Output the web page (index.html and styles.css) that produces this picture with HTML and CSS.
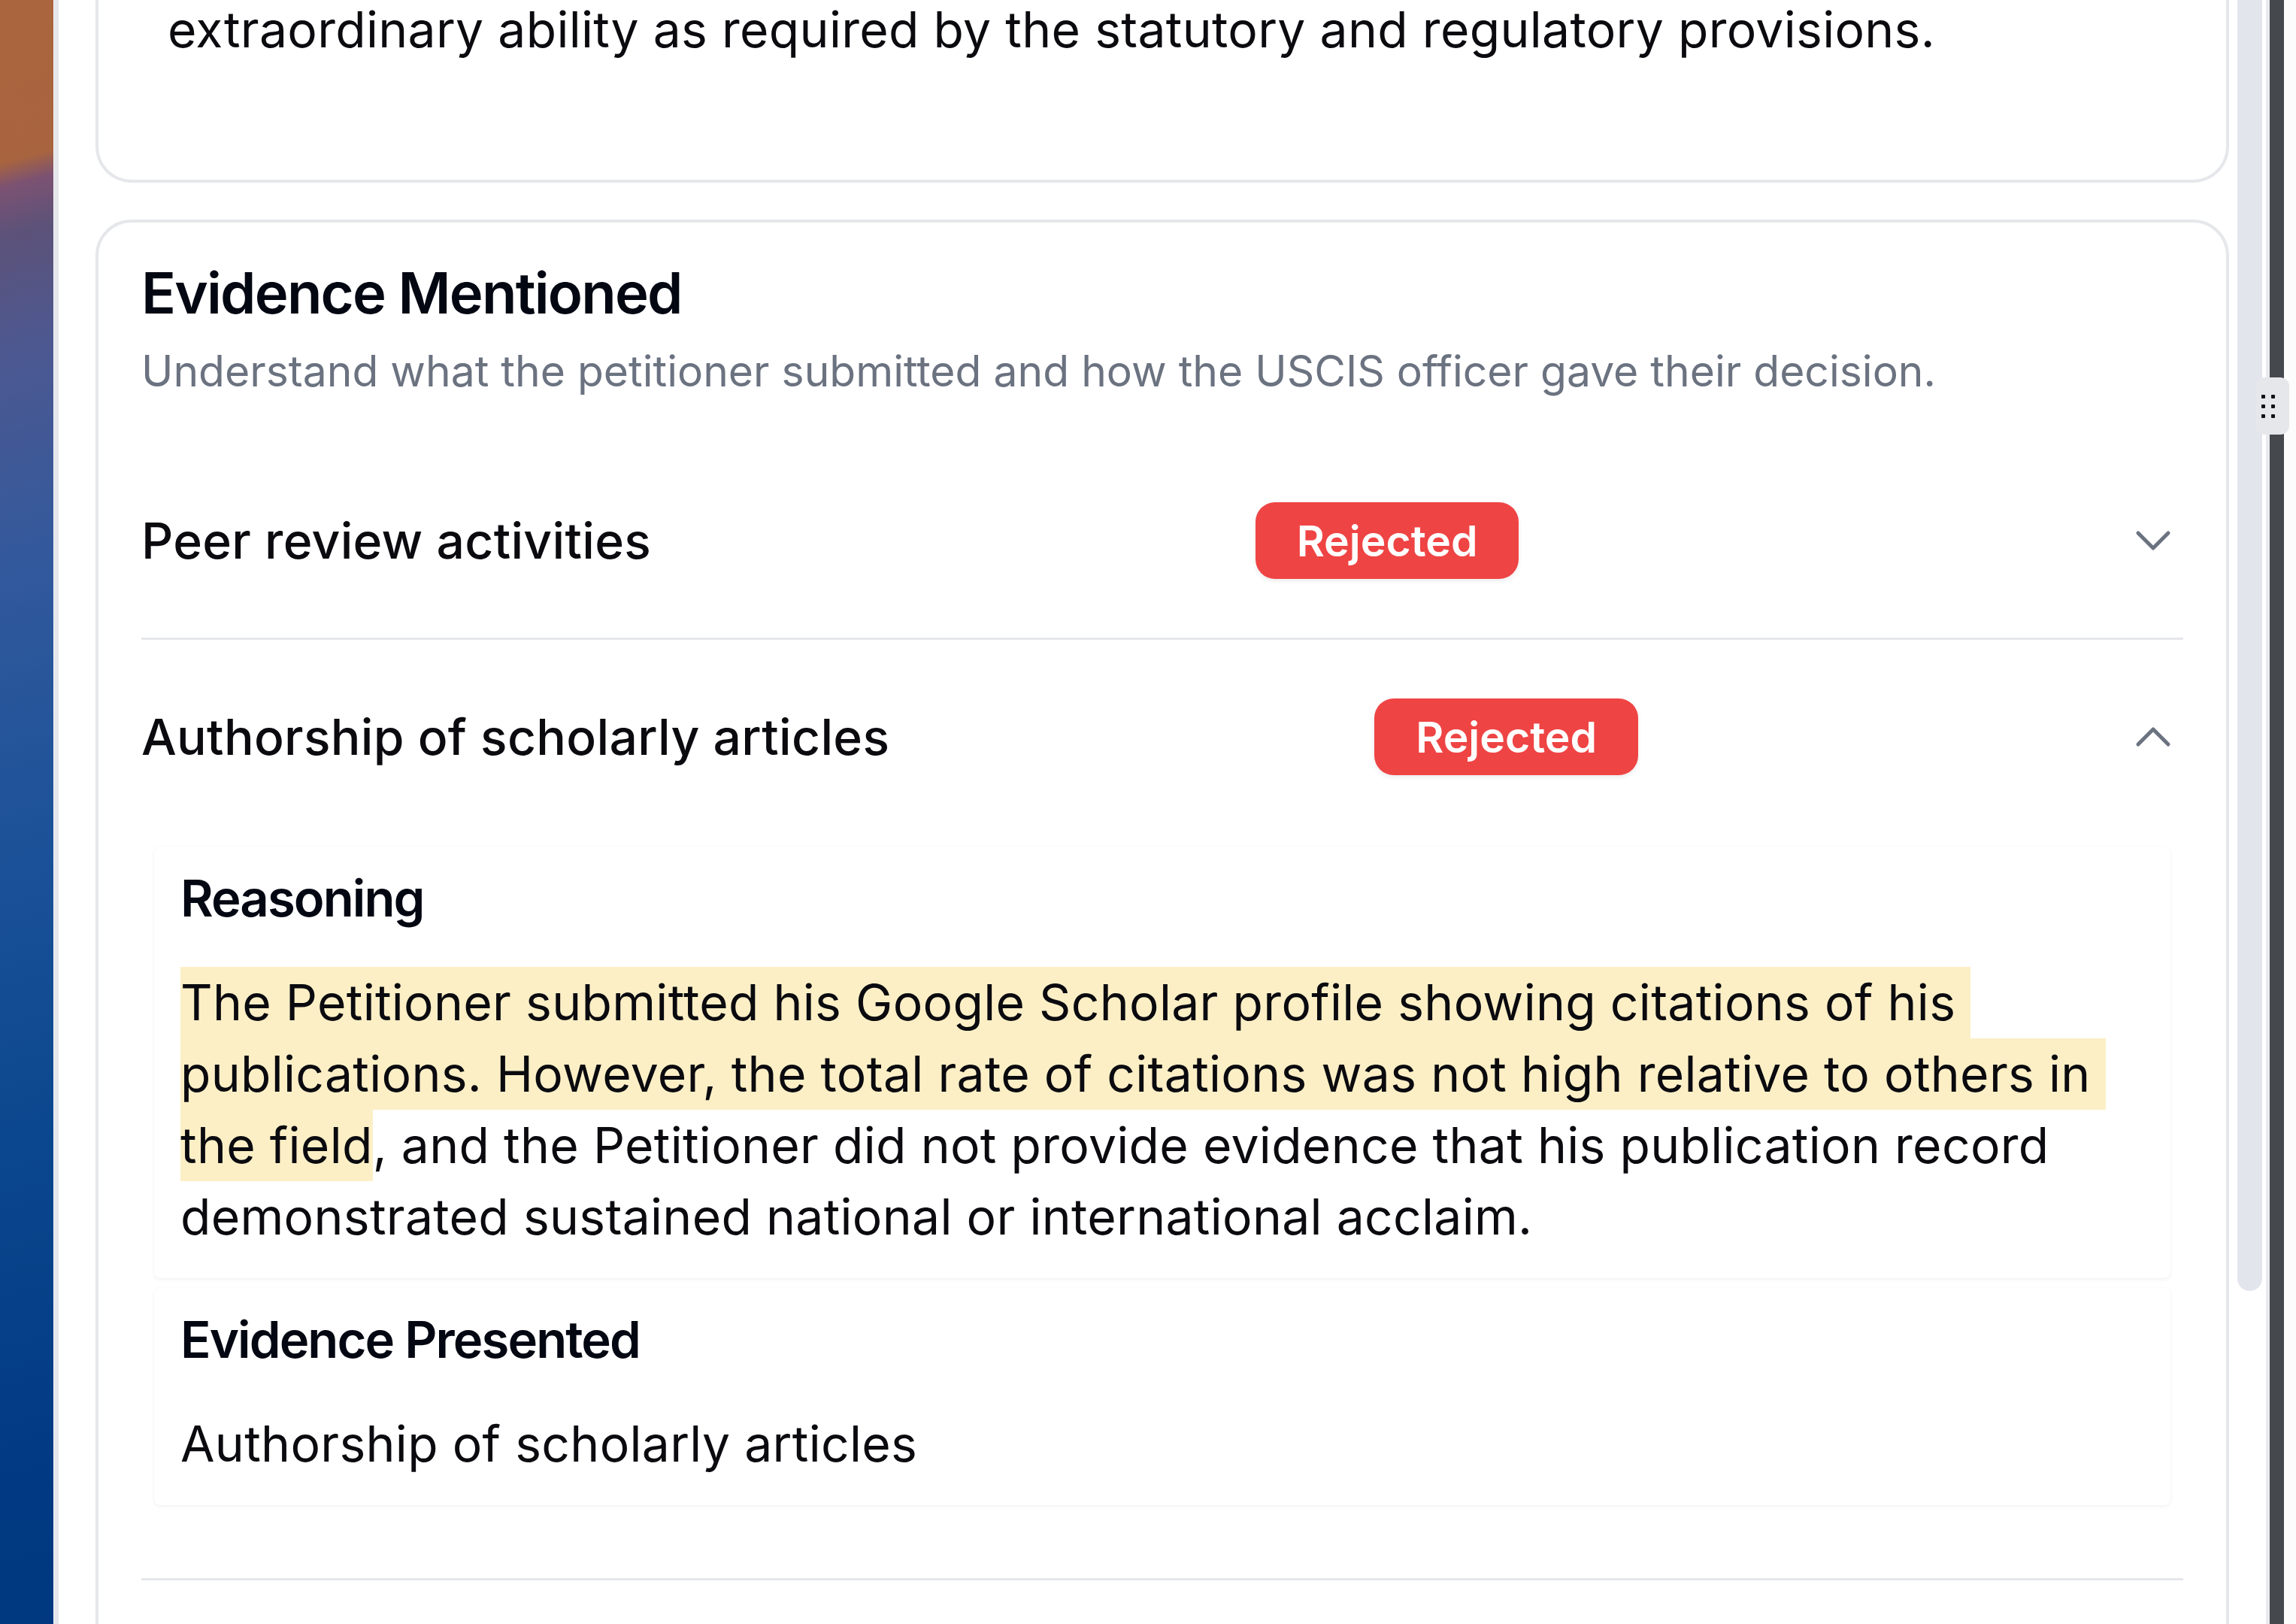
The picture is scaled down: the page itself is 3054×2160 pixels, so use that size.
FILE: index.html
```html
<!DOCTYPE html>
<html lang="en">
<head>
<meta charset="utf-8">
<title>Evidence Mentioned</title>
<link rel="stylesheet" href="styles.css">
</head>
<body>
<div class="screen">
  <div class="wallpaper"></div>
  <div class="win-edge"></div>
  <main class="main">
    <div class="content">
      <section class="card card-tail">
        <p class="tail-text">extraordinary ability as required by the statutory and regulatory provisions.</p>
      </section>
      <section class="card card-evidence">
        <h2 class="card-title">Evidence Mentioned</h2>
        <p class="card-sub">Understand what the petitioner submitted and how the USCIS officer gave their decision.</p>
        <div class="acc">
          <div class="acc-item">
            <div class="acc-head">
              <span class="acc-title">Peer review activities</span>
              <span class="badge">Rejected</span>
              <svg class="chev" viewBox="0 0 24 24" fill="none" stroke="currentColor" stroke-width="1.5" stroke-linecap="round" stroke-linejoin="round"><path d="m6 9 6 6 6-6"/></svg>
            </div>
          </div>
          <div class="acc-item open">
            <div class="acc-head">
              <span class="acc-title">Authorship of scholarly articles</span>
              <span class="badge">Rejected</span>
              <svg class="chev" viewBox="0 0 24 24" fill="none" stroke="currentColor" stroke-width="1.5" stroke-linecap="round" stroke-linejoin="round"><path d="m18 15-6-6-6 6"/></svg>
            </div>
            <div class="acc-body">
              <div class="panel">
                <h3 class="panel-title">Reasoning</h3>
                <p class="panel-text"><mark class="hl hl-cont">The Petitioner submitted his Google Scholar profile showing citations of his</mark> <mark class="hl hl-cont">publications. However, the total rate of citations was not high relative to others in</mark> <mark class="hl">the field</mark>, and the Petitioner did not provide evidence that his publication record demonstrated sustained national or international acclaim.</p>
              </div>
              <div class="panel">
                <h3 class="panel-title">Evidence Presented</h3>
                <p class="panel-text">Authorship of scholarly articles</p>
              </div>
            </div>
          </div>
        </div>
      </section>
    </div>
    <div class="scroll-track"><div class="scroll-thumb"></div></div>
  </main>
  <div class="pane-line"></div>
  <div class="pane-dark"></div>
  <div class="pane-right"></div>
  <div class="grip"><i></i><i></i><i></i><i></i><i></i><i></i></div>
</div>
</body>
</html>
```

FILE: styles.css
```css
* { box-sizing: border-box; margin: 0; padding: 0; }

html, body {
  width: 3054px;
  height: 2160px;
  overflow: hidden;
}

body {
  font-family: Inter, "Noto Sans", "Liberation Sans", sans-serif;
  color: #0a0a0f;
  background: #ffffff;
}

.screen {
  position: relative;
  display: flex;
  height: 2160px;
}

.wallpaper {
  flex: none;
  width: 71px;
  background: linear-gradient(165deg,
    #aa653e 0px,
    #a8643f 210px,
    #7c5272 242px,
    #5c5279 305px,
    #4d5890 450px,
    #33599c 720px,
    #1d5299 1070px,
    #0b478e 1470px,
    #023b83 1870px,
    #00377f 2160px);
}

.win-edge {
  flex: none;
  width: 7px;
  background: #e4e6eb;
  border-left: 1px solid #f4f5f7;
}

.main {
  flex: none;
  width: 2936px;
  display: flex;
  background: #ffffff;
}

.content {
  flex: none;
  width: 2887px;
  padding-left: 49px;
  display: flex;
  flex-direction: column;
  gap: 49px;
}

.card {
  width: 2838px;
  background: #ffffff;
  border: 4px solid #e5e7eb;
  border-radius: 48px;
}

.card-tail {
  border-top: none;
  border-radius: 0 0 48px 48px;
  padding: 0 57px 160px 92px;
}

.tail-text {
  font-size: 66px;
  line-height: 79px;
  letter-spacing: 0.3px;
  color: #0a0a0f;
}

.card-evidence {
  padding: 47px 57px 0 57px;
  min-height: 2000px;
}

.card-title {
  font-size: 76px;
  line-height: 92px;
  font-weight: 600;
  color: #030712;
  letter-spacing: -1.8px;
}

.card-sub {
  margin-top: 19px;
  font-size: 57px;
  line-height: 80px;
  color: #6b7280;
}

.acc {
  margin-top: 56px;
}

.acc-item {
  border-bottom: 3px solid #e5e7eb;
}

.acc-head {
  display: flex;
  justify-content: space-between;
  align-items: center;
  padding: 78px 0;
}

.acc-title {
  font-size: 66px;
  line-height: 79px;
  font-weight: 500;
  letter-spacing: 0.3px;
  color: #0a0a0f;
}

.badge {
  display: inline-flex;
  align-items: center;
  height: 102px;
  padding: 0 55px;
  border-radius: 26px;
  background: #ef4444;
  color: #ffffff;
  font-size: 57px;
  font-weight: 600;
  box-shadow: 0 3px 6px rgba(0, 0, 0, 0.08);
}

.chev {
  width: 80px;
  height: 80px;
  color: #6b7280;
  flex: none;
}

.acc-body {
  padding: 17px 17px 97px;
  display: flex;
  flex-direction: column;
  gap: 13px;
}

.panel {
  background: #ffffff;
  border-radius: 8px;
  padding: 28px 35px 34px;
  box-shadow: 0 2px 5px rgba(0, 0, 0, 0.05), 0 0 2px rgba(0, 0, 0, 0.04);
}

.panel-title {
  font-size: 67px;
  line-height: 82px;
  font-weight: 600;
  letter-spacing: -1.9px;
  color: #030712;
  margin-bottom: 50px;
}

.panel-text {
  font-size: 66px;
  line-height: 95px;
  letter-spacing: 0.3px;
  color: #0a0a0f;
}

.hl {
  display: inline-block;
  line-height: 95px;
  background: #fcefc6;
  color: inherit;
}

.hl-cont {
  padding-right: 20px;
}

.scroll-track {
  flex: none;
  width: 33px;
  margin-left: 11px;
}

.scroll-thumb {
  height: 1717px;
  background: #e2e5ec;
  border-radius: 0 0 17px 17px;
}

.pane-line {
  flex: none;
  width: 5px;
  background: #e8eaee;
}

.pane-dark {
  flex: none;
  width: 19px;
  background: #45494e;
}

.pane-right {
  flex: none;
  width: 16px;
  background: #fcfcfc;
}

.grip {
  position: absolute;
  left: 3000px;
  top: 502px;
  width: 45px;
  height: 76px;
  border-radius: 12px;
  background: #e5e7eb;
  display: grid;
  grid-template-columns: 5px 5px;
  grid-template-rows: 5px 5px 5px;
  column-gap: 8px;
  row-gap: 8px;
  padding: 23px 0 0 8px;
}

.grip i {
  display: block;
  width: 5px;
  height: 5px;
  border-radius: 1px;
  background: #111318;
}
```
